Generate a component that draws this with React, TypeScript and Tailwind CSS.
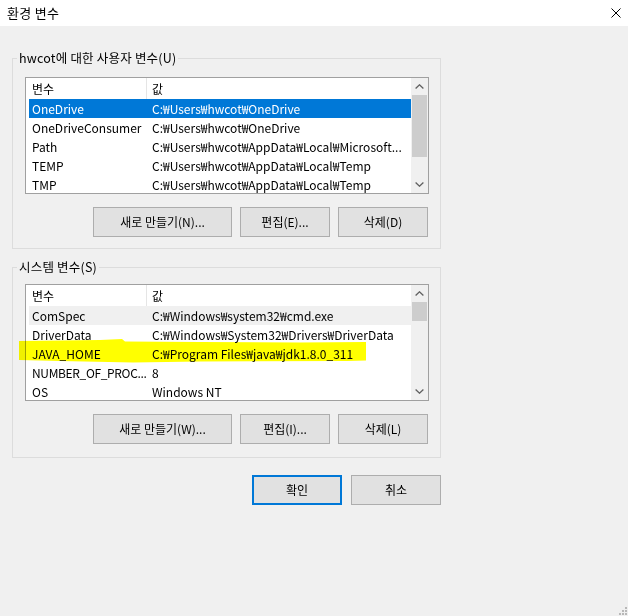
import React from "react";

type Row = { name: string; value: string; state?: "sel" | "gray"; tight?: boolean };

const userRows: Row[] = [
  { name: "OneDrive", value: "C:₩Users₩hwcot₩OneDrive", state: "sel" },
  { name: "OneDriveConsumer", value: "C:₩Users₩hwcot₩OneDrive" },
  { name: "Path", value: "C:₩Users₩hwcot₩AppData₩Local₩Microsoft..." },
  { name: "TEMP", value: "C:₩Users₩hwcot₩AppData₩Local₩Temp" },
  { name: "TMP", value: "C:₩Users₩hwcot₩AppData₩Local₩Temp" },
];

const sysRows: Row[] = [
  { name: "ComSpec", value: "C:₩Windows₩system32₩cmd.exe", state: "gray" },
  { name: "DriverData", value: "C:₩Windows₩System32₩Drivers₩DriverData" },
  { name: "JAVA_HOME", value: "C:₩Program Files₩java₩jdk1.8.0_311" },
  { name: "NUMBER_OF_PROC...", value: "8", tight: true },
  { name: "OS", value: "Windows NT" },
];

function Chevron({ up }: { up: boolean }) {
  return (
    <svg width="9" height="5" viewBox="0 0 9 5">
      <path
        d={up ? "M0.6 4.4 L4.5 0.8 L8.4 4.4" : "M0.6 0.6 L4.5 4.2 L8.4 0.6"}
        fill="none"
        stroke="#606060"
        strokeWidth="1.3"
      />
    </svg>
  );
}

function ListView({ rows, thumbClass }: { rows: Row[]; thumbClass: string }) {
  return (
    <div className="flex h-[117px] w-[404px] border border-[#a0a0a0] bg-white">
      <div className="flex min-w-0 flex-1 flex-col overflow-hidden pl-[3px]">
        <div className="flex h-[21px] shrink-0 items-center">
          <div className="w-[117px] pl-[3px]">변수</div>
          <div className="h-full w-px bg-[#e5e5e5]" />
          <div className="pl-[5px]">값</div>
        </div>
        {rows.map((r) => (
          <div
            key={r.name}
            className={`flex h-[19px] shrink-0 items-center whitespace-nowrap ${
              r.state === "sel"
                ? "bg-[#0078d7] text-white"
                : r.state === "gray"
                ? "bg-[#f0f0f0]"
                : ""
            }`}
          >
            <div
              className={`w-[118px] shrink-0 overflow-hidden pl-[3px] ${
                r.tight ? "tracking-[-0.35px]" : ""
              }`}
            >
              {r.name}
            </div>
            <div className="pl-[5px]">{r.value}</div>
          </div>
        ))}
      </div>
      <div className="flex w-[17px] shrink-0 flex-col bg-[#f0f0f0]">
        <div className="flex h-[17px] items-center justify-center">
          <Chevron up />
        </div>
        <div className="flex-1">
          <div className={`mx-px bg-[#cdcdcd] ${thumbClass}`} />
        </div>
        <div className="flex h-[17px] items-center justify-center">
          <Chevron up={false} />
        </div>
      </div>
    </div>
  );
}

function Btn({
  children,
  w,
  def,
}: {
  children: React.ReactNode;
  w: string;
  def?: boolean;
}) {
  return (
    <button
      className={`flex h-[30px] ${w} items-center justify-center bg-[#e1e1e1] text-[12px] text-black ${
        def ? "border-2 border-[#0078d7]" : "border border-[#adadad]"
      }`}
    >
      {children}
    </button>
  );
}

function Group({
  label,
  rows,
  thumbClass,
  btns,
  outer,
  inner,
}: {
  label: string;
  rows: Row[];
  thumbClass: string;
  btns: [string, string, string];
  outer: string;
  inner: string;
}) {
  return (
    <div className={`relative ml-[12px] w-[429px] border border-[#dcdcdc] pl-[12px] ${outer}`}>
      <span className="absolute left-[4px] top-[-9px] bg-[#f0f0f0] px-[2px] text-[12.5px] leading-[16px] tracking-[0.2px]">
        {label}
      </span>
      <ListView rows={rows} thumbClass={thumbClass} />
      <div className={`flex w-[403px] justify-end gap-[8px] ${inner}`}>
        <Btn w="w-[139px]">{btns[0]}</Btn>
        <Btn w="w-[90px]">{btns[1]}</Btn>
        <Btn w="w-[90px]">{btns[2]}</Btn>
      </div>
    </div>
  );
}

export default function App() {
  return (
    <div className="relative h-[616px] w-[628px] overflow-hidden bg-[#f0f0f0] font-['Noto_Sans_CJK_KR','Noto_Sans',sans-serif] text-[12px] text-black">
      <div className="flex h-[26px] items-center justify-between bg-white pl-[7px] pr-[7px]">
        <span className="text-[13px] tracking-[0.3px]">환경 변수</span>
        <svg width="10" height="10" viewBox="0 0 10 10">
          <path d="M0.5 0.5 L9.5 9.5 M9.5 0.5 L0.5 9.5" stroke="#000" strokeWidth="1" />
        </svg>
      </div>

      <Group
        label="hwcot에 대한 사용자 변수(U)"
        rows={userRows}
        thumbClass="h-[62px]"
        btns={["새로 만들기(N)...", "편집(E)...", "삭제(D)"]}
        outer="mt-[32px] pt-[18px] pb-[11px]"
        inner="mt-[13px]"
      />

      <Group
        label="시스템 변수(S)"
        rows={sysRows}
        thumbClass="h-[19px]"
        btns={["새로 만들기(W)...", "편집(I)...", "삭제(L)"]}
        outer="mt-[18px] pt-[16px] pb-[13px]"
        inner="mt-[13px]"
      />

      <div className="ml-[12px] mt-[17px] flex w-[429px] justify-end gap-[9px]">
        <Btn w="w-[90px]" def>
          확인
        </Btn>
        <Btn w="w-[90px]">취소</Btn>
      </div>

      <svg
        className="pointer-events-none absolute left-[18px] top-[338px] mix-blend-multiply"
        width="350"
        height="26"
        viewBox="0 0 350 26"
      >
        <polygon
          points="1,3 42,2.5 82,2 104,1 107,3.5 182,4 282,4.5 348,4 348,22.5 329,23 182,23.5 115,24.5 42,23 1,22"
          fill="#ffff00"
        />
      </svg>

      <svg className="absolute bottom-0 right-0" width="12" height="12" viewBox="0 0 12 12">
        <rect x="9" y="9" width="2" height="2" fill="#b8b8b8" />
        <rect x="6" y="9" width="2" height="2" fill="#b8b8b8" />
        <rect x="3" y="9" width="2" height="2" fill="#b8b8b8" />
        <rect x="9" y="6" width="2" height="2" fill="#b8b8b8" />
        <rect x="6" y="6" width="2" height="2" fill="#b8b8b8" />
        <rect x="9" y="3" width="2" height="2" fill="#b8b8b8" />
      </svg>
    </div>
  );
}
